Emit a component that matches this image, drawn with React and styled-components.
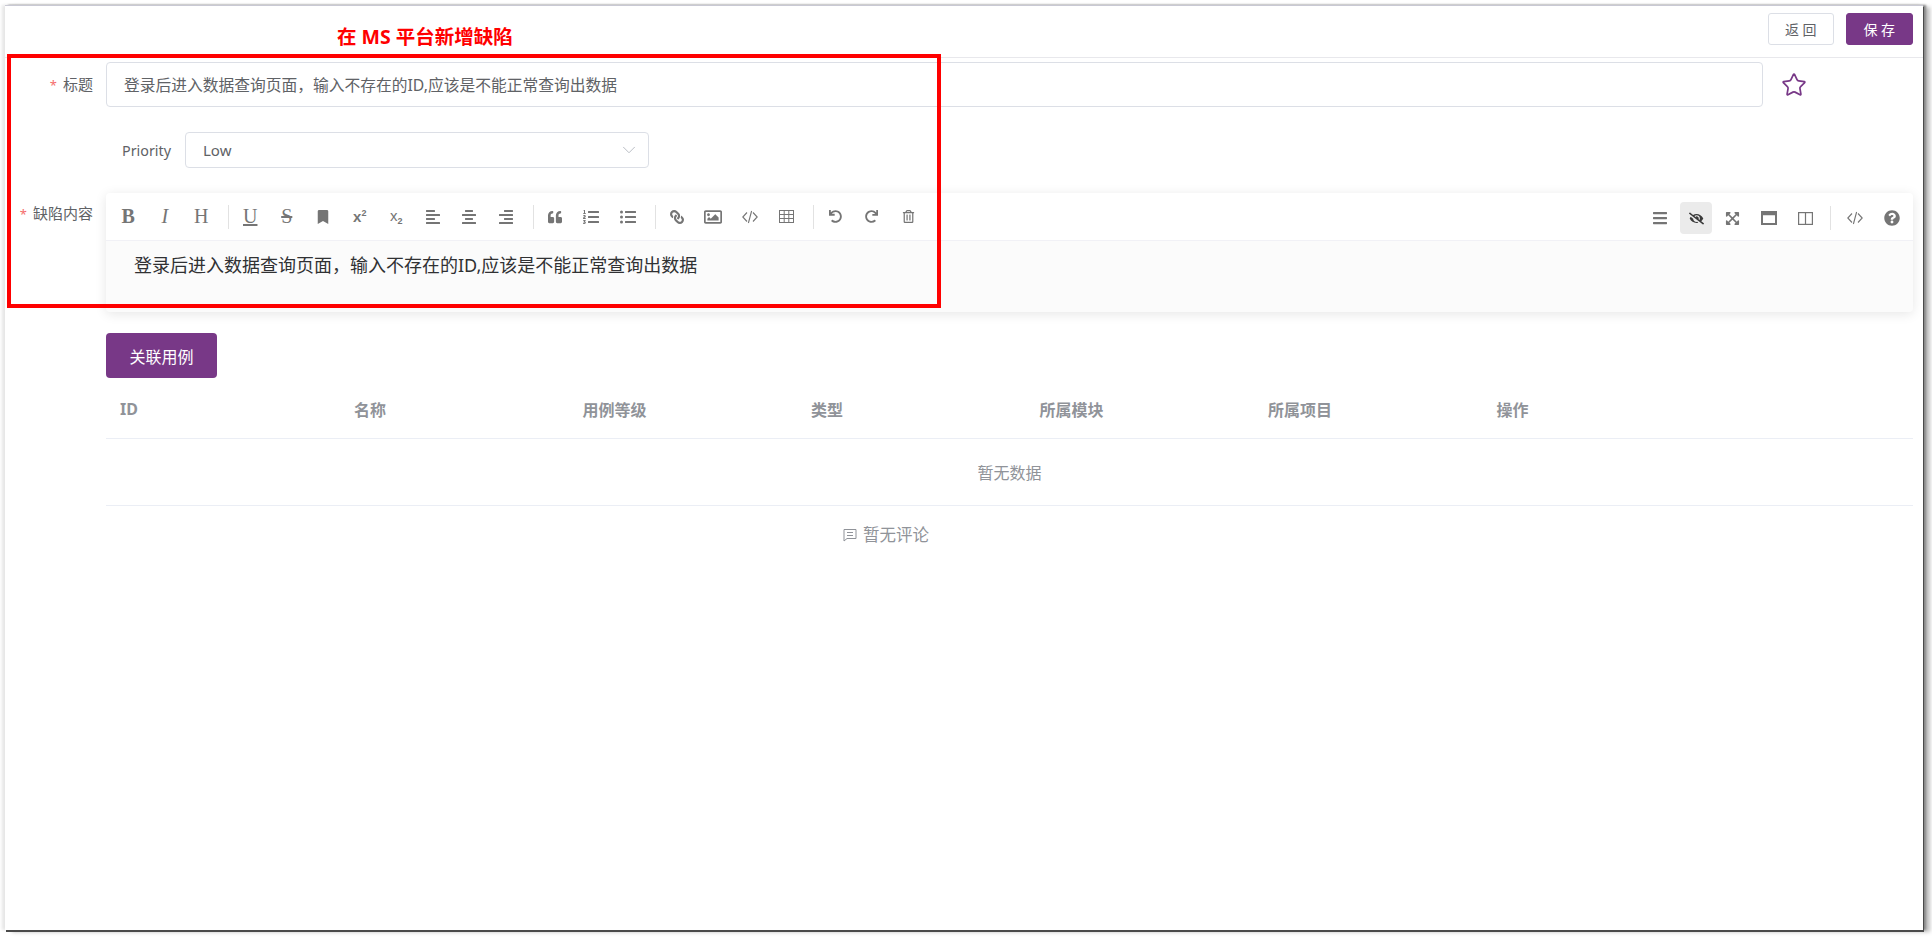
import React from 'react';
import styled, { createGlobalStyle } from 'styled-components';
import {
  FaBookmark, FaAlignLeft, FaAlignCenter, FaAlignRight, FaQuoteLeft, FaListOl, FaListUl,
  FaLink, FaRegImage, FaUndo, FaRedo, FaRegTrashAlt, FaBars, FaEyeSlash,
  FaExpandArrowsAlt, FaQuestionCircle,
} from 'react-icons/fa';
import { ChevronDown, Star } from 'lucide-react';

const PURPLE = '#783887';
const FONT = '"Noto Sans", "Noto Sans CJK SC", sans-serif';

const GlobalStyle = createGlobalStyle`
  html, body { margin: 0; padding: 0; background: #fff; }
  body { font-family: ${FONT}; overflow: hidden; }
  * { box-sizing: border-box; }
`;

const Page = styled.div`
  width: 1932px;
  height: 939px;
  padding: 5px 9px 9px 5px;
`;

const Frame = styled.div`
  position: relative;
  height: 100%;
  background: #fff;
  border-top: 1px solid #c9c9d4;
  box-shadow: 1px 2px 0 #4a4a4a, 3px 0 2px #888, 7px 2px 4px rgba(0, 0, 0, 0.25), -3px 0 3px rgba(0, 0, 0, 0.1);
`;

const Header = styled.div`
  height: 52px;
  display: flex;
  align-items: center;
  justify-content: flex-end;
  gap: 12px;
  padding: 0 10px 6px 0;
  border-bottom: 1px solid #e8e8ec;
`;

const TopButton = styled.div`
  width: ${p => (p.$primary ? 67 : 66)}px;
  height: 32px;
  display: flex;
  align-items: center;
  justify-content: center;
  border-radius: 3px;
  font-size: 14px;
  letter-spacing: 3.5px;
  padding-left: 3px;
  color: ${p => (p.$primary ? '#fff' : '#606266')};
  background: ${p => (p.$primary ? PURPLE : '#fff')};
  border: 1px solid ${p => (p.$primary ? PURPLE : '#dcdfe6')};
`;

const AnnotationTitle = styled.div`
  position: absolute;
  left: 332px;
  top: 17px;
  line-height: 27px;
  font-size: 19.5px;
  font-weight: 700;
  color: #f00;
  white-space: nowrap;
`;

const AnnotationBox = styled.div`
  position: absolute;
  left: 2px;
  top: 48px;
  width: 934px;
  height: 254px;
  border: 4px solid #f00;
  pointer-events: none;
`;

const Form = styled.div`
  display: flex;
  flex-direction: column;
  padding-right: 10px;
`;

const Row = styled.div`
  display: flex;
  align-items: ${p => p.$align || 'center'};
  margin-top: ${p => p.$top || 0}px;
`;

const Label = styled.div`
  width: 88px;
  margin-right: 13px;
  flex: none;
  text-align: right;
  font-size: 15px;
  line-height: 24px;
  color: #606266;
  white-space: nowrap;
  padding-top: ${p => p.$pad || 0}px;
  & > i { color: #f56c6c; font-style: normal; margin-right: 6px; font-size: 13px; }
`;

const TitleInput = styled.div`
  flex: none;
  width: 1657px;
  height: 45px;
  display: flex;
  align-items: center;
  padding: 0 15px 0 17px;
  border: 1px solid #dcdfe6;
  border-radius: 4px;
  font-size: 15.75px;
  color: #606266;
  white-space: nowrap;
`;

const StarWrap = styled.div`
  margin-left: 18px;
  display: flex;
  color: ${PURPLE};
`;

const PriorityLabel = styled.div`
  margin-left: 117px;
  width: 63px;
  font-size: 14.3px;
  color: #606266;
`;

const Select = styled.div`
  width: 464px;
  height: 36px;
  display: flex;
  align-items: center;
  justify-content: space-between;
  padding: 0 8px 0 17px;
  border: 1px solid #dcdfe6;
  border-radius: 4px;
  font-size: 15px;
  color: #606266;
  & svg { color: #b4b8c0; }
`;

const Editor = styled.div`
  flex: 1;
  height: 119px;
  border-radius: 4px;
  background: #fbfbfb;
  box-shadow: 0 2px 12px rgba(0, 0, 0, 0.1);
`;

const Toolbar = styled.div`
  height: 48px;
  display: flex;
  align-items: center;
  justify-content: space-between;
  background: #fff;
  border-bottom: 1px solid #f1f1f6;
  border-radius: 4px 4px 0 0;
  padding: 0 3px 0 4px;
`;

const ToolGroup = styled.div`
  display: flex;
  align-items: center;
  padding-top: ${p => p.$pad || 0}px;
`;

const Tool = styled.div`
  width: 36.5px;
  height: 32px;
  display: flex;
  align-items: center;
  justify-content: center;
  color: #757575;
  font-size: 15px;
`;

const ActiveTool = styled(Tool)`
  position: relative;
  color: #3a3a3a;
  &::before {
    content: '';
    position: absolute;
    width: 32px;
    height: 32px;
    border-radius: 4px;
    background: #ebebeb;
  }
  & > svg { position: relative; }
`;

const Glyph = styled.span`
  font-family: "Liberation Serif", serif;
  font-size: ${p => p.$size || 20}px;
  font-weight: ${p => (p.$bold ? 700 : 400)};
  font-style: ${p => (p.$italic ? 'italic' : 'normal')};
  text-decoration: ${p => p.$deco || 'none'};
  line-height: 1;
  padding-bottom: 2px;
`;

const Script = styled.span`
  font-family: "Liberation Sans", sans-serif;
  font-size: 15px;
  font-weight: ${p => (p.$bold ? 700 : 400)};
  line-height: 1;
  & > small { font-size: 9px; vertical-align: ${p => (p.$sub ? '-3px' : '6px')}; font-weight: 700; }
`;

const Divider = styled.div`
  width: 1px;
  height: 24px;
  background: #e2e2e2;
  margin: 0 ${p => p.$right || 3}px 0 ${p => p.$left || 8.5}px;
`;

const EditorBody = styled.div`
  padding: 9px 0 0 28px;
  font-size: 18px;
  line-height: 30px;
  color: #303133;
`;

const LinkButton = styled.div`
  width: 111px;
  height: 45px;
  margin: 21px 0 0 101px;
  display: flex;
  align-items: center;
  justify-content: center;
  border-radius: 4px;
  background: ${PURPLE};
  color: #fff;
  font-size: 16px;
`;

const Table = styled.div`
  margin-left: 101px;
`;

const TableHead = styled.div`
  height: 61px;
  display: grid;
  grid-template-columns: 234px repeat(6, 228.5px) 1fr;
  align-items: center;
  border-bottom: 1px solid #ebeef5;
  font-size: 16px;
  font-weight: 700;
  color: #909399;
  & > div { padding: 1px 0 0 14px; }
`;

const TableEmpty = styled.div`
  height: 67px;
  display: flex;
  align-items: center;
  justify-content: center;
  border-bottom: 1px solid #ebeef5;
  font-size: 16px;
  color: #909399;
`;

const NoComment = styled.div`
  margin: 15px 0 0 838px;
  width: 200px;
  display: flex;
  align-items: center;
  gap: 6px;
  font-size: 16.5px;
  line-height: 27px;
  color: #909399;
`;

const CodeIcon = ({ size = 16 }) => (
  <svg width={size} height={size} viewBox="0 0 16 16" fill="none" stroke="currentColor" strokeWidth="1.1">
    <path d="M5 3.5 0.8 8 5 12.5M11 3.5 15.2 8 11 12.5M9.6 2 6.4 14" />
  </svg>
);

const GridIcon = () => (
  <svg width="15" height="13" viewBox="0 0 15 13" fill="none" stroke="currentColor" strokeWidth="1">
    <rect x="0.5" y="0.5" width="14" height="12" />
    <path d="M0.5 4.5h14M0.5 8.5h14M5.2 0.5v12M9.8 0.5v12" />
  </svg>
);

const ColumnsIcon = () => (
  <svg width="15" height="13" viewBox="0 0 15 13" fill="none" stroke="currentColor" strokeWidth="1.2">
    <rect x="0.6" y="0.6" width="13.8" height="11.8" />
    <path d="M7.5 0.6v11.8" />
  </svg>
);

const WindowIcon = () => (
  <svg width="16" height="14" viewBox="0 0 16 14" fill="none" stroke="currentColor">
    <rect x="1" y="1" width="14" height="12" strokeWidth="2" />
    <path d="M1 3h14" strokeWidth="2.5" />
  </svg>
);

const CommentIcon = () => (
  <svg width="14" height="14" viewBox="0 0 14 14" fill="none" stroke="currentColor" strokeWidth="1">
    <path d="M1 1.5h12v9H4l-3 2.5zM4 4.5h6M4 7.5h6" />
  </svg>
);

const columns = ['ID', '名称', '用例等级', '类型', '所属模块', '所属项目', '操作', ''];

export default function App() {
  return (
    <Page>
      <GlobalStyle />
      <Frame>
        <Header>
          <TopButton>返回</TopButton>
          <TopButton $primary>保存</TopButton>
        </Header>
        <AnnotationTitle>在 MS 平台新增缺陷</AnnotationTitle>
        <AnnotationBox />
        <Form>
          <Row $top={4}>
            <Label><i>*</i>标题</Label>
            <TitleInput>登录后进入数据查询页面，输入不存在的ID,应该是不能正常查询出数据</TitleInput>
            <StarWrap><Star size={26} strokeWidth={1.6} /></StarWrap>
          </Row>
          <Row $top={25}>
            <PriorityLabel>Priority</PriorityLabel>
            <Select>Low<ChevronDown size={22} strokeWidth={1} /></Select>
          </Row>
          <Row $top={25} $align="flex-start">
            <Label $pad={8}><i>*</i>缺陷内容</Label>
            <Editor>
              <Toolbar>
                <ToolGroup>
                  <Tool><Glyph $bold>B</Glyph></Tool>
                  <Tool><Glyph $italic>I</Glyph></Tool>
                  <Tool><Glyph>H</Glyph></Tool>
                  <Divider />
                  <Tool><Glyph $deco="underline">U</Glyph></Tool>
                  <Tool><Glyph $deco="line-through">S</Glyph></Tool>
                  <Tool><FaBookmark size={14} /></Tool>
                  <Tool><Script $bold>x<small>2</small></Script></Tool>
                  <Tool><Script $sub>x<small>2</small></Script></Tool>
                  <Tool><FaAlignLeft size={16} /></Tool>
                  <Tool><FaAlignCenter size={16} /></Tool>
                  <Tool><FaAlignRight size={16} /></Tool>
                  <Divider />
                  <Tool><FaQuoteLeft size={14} /></Tool>
                  <Tool><FaListOl size={16} /></Tool>
                  <Tool><FaListUl size={16} /></Tool>
                  <Divider />
                  <Tool><FaLink size={14} style={{ transform: 'scaleX(-1)' }} /></Tool>
                  <Tool><FaRegImage size={18} /></Tool>
                  <Tool><CodeIcon /></Tool>
                  <Tool><GridIcon /></Tool>
                  <Divider />
                  <Tool><FaUndo size={13} /></Tool>
                  <Tool><FaRedo size={13} /></Tool>
                  <Tool><FaRegTrashAlt size={13} /></Tool>
                </ToolGroup>
                <ToolGroup $pad={3}>
                  <Tool><FaBars size={16} /></Tool>
                  <ActiveTool><FaEyeSlash size={15} /></ActiveTool>
                  <Tool><FaExpandArrowsAlt size={15} /></Tool>
                  <Tool><WindowIcon /></Tool>
                  <Tool><ColumnsIcon /></Tool>
                  <Divider $left={6} $right={6} />
                  <Tool><CodeIcon /></Tool>
                  <Tool><FaQuestionCircle size={16} /></Tool>
                </ToolGroup>
              </Toolbar>
              <EditorBody>登录后进入数据查询页面，输入不存在的ID,应该是不能正常查询出数据</EditorBody>
            </Editor>
          </Row>
          <LinkButton>关联用例</LinkButton>
          <Table>
            <TableHead>
              {columns.map((name, i) => <div key={i}>{name}</div>)}
            </TableHead>
            <TableEmpty>暂无数据</TableEmpty>
          </Table>
          <NoComment><CommentIcon />暂无评论</NoComment>
        </Form>
      </Frame>
    </Page>
  );
}
